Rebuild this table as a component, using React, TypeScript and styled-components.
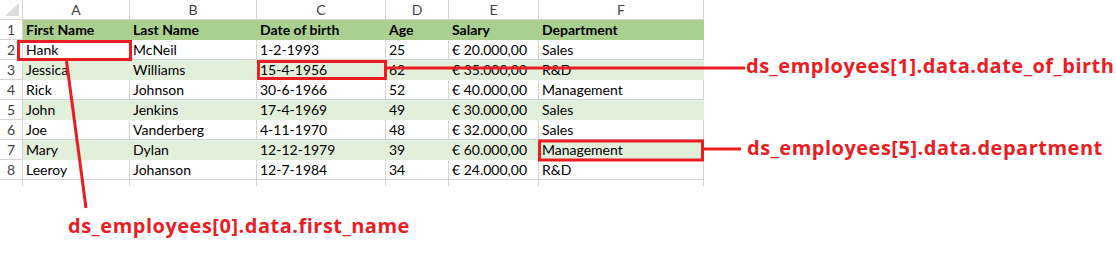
import React from "react";
import styled, { createGlobalStyle } from "styled-components";

const GlobalStyle = createGlobalStyle`
  body {
    margin: 0;
    background: #ffffff;
  }
`;

const RED = "#ec1c24";
const GRID = "#d4d4d4";

const Page = styled.div`
  position: relative;
  width: 1116px;
  height: 260px;
  overflow: hidden;
  background: #ffffff;
`;

const Sheet = styled.div`
  display: grid;
  grid-template-columns: 23px 107px 127px 129px 63px 90px 165px;
  grid-auto-rows: 20px;
  width: 704px;
  font-family: Lato, "Liberation Sans", sans-serif;
  font-size: 14px;
  color: #000000;
`;

const Corner = styled.div`
  position: relative;
  box-sizing: border-box;
  border-right: 1px solid ${GRID};
  border-bottom: 1px solid ${GRID};
  &::after {
    content: "";
    position: absolute;
    right: 3px;
    bottom: 3px;
    width: 0;
    height: 0;
    border-left: 14px solid transparent;
    border-bottom: 13px solid #dcdcdc;
  }
`;

const HeadCell = styled.div`
  box-sizing: border-box;
  border-right: 1px solid ${GRID};
  border-bottom: 1px solid ${GRID};
  display: flex;
  align-items: center;
  justify-content: center;
  font-size: 14px;
  color: #444444;
`;

const Cell = styled.div<{ $fill?: string; $bold?: boolean }>`
  box-sizing: border-box;
  padding-left: 3px;
  border-right: 1px solid ${({ $fill }) => ($fill ? "transparent" : GRID)};
  border-bottom: 1px solid ${({ $fill }) => ($fill ? "transparent" : GRID)};
  background: ${({ $fill }) => $fill ?? "transparent"};
  font-weight: ${({ $bold }) => ($bold ? 700 : 400)};
  line-height: 19px;
  white-space: nowrap;
  overflow: visible;
`;

const Stub = styled.div`
  height: 6px;
  box-sizing: border-box;
  border-right: 1px solid ${GRID};
`;

const Overlay = styled.svg`
  position: absolute;
  left: 0;
  top: 0;
  pointer-events: none;
`;

const Callout = styled.span<{ $x: number; $y: number }>`
  position: absolute;
  left: ${({ $x }) => $x}px;
  top: ${({ $y }) => $y}px;
  font-family: "Open Sans", "Liberation Sans", sans-serif;
  font-weight: 700;
  font-size: 20px;
  letter-spacing: 0.5px;
  line-height: 24px;
  color: ${RED};
  white-space: nowrap;
`;

const columns = ["A", "B", "C", "D", "E", "F"];

const header = ["First Name", "Last Name", "Date of birth", "Age", "Salary", "Department"];

const employees = [
  ["Hank", "McNeil", "1-2-1993", "25", "€ 20.000,00", "Sales"],
  ["Jessica", "Williams", "15-4-1956", "62", "€ 35.000,00", "R&D"],
  ["Rick", "Johnson", "30-6-1966", "52", "€ 40.000,00", "Management"],
  ["John", "Jenkins", "17-4-1969", "49", "€ 30.000,00", "Sales"],
  ["Joe", "Vanderberg", "4-11-1970", "48", "€ 32.000,00", "Sales"],
  ["Mary", "Dylan", "12-12-1979", "39", "€ 60.000,00", "Management"],
  ["Leeroy", "Johanson", "12-7-1984", "34", "€ 24.000,00", "R&D"],
];

const HEADER_FILL = "#a9d08e";
const BAND_FILL = "#e2efda";

export default function App() {
  return (
    <Page>
      <GlobalStyle />
      <Sheet>
        <Corner />
        {columns.map((c) => (
          <HeadCell key={c}>{c}</HeadCell>
        ))}

        <HeadCell>1</HeadCell>
        {header.map((h) => (
          <Cell key={h} $fill={HEADER_FILL} $bold>
            {h}
          </Cell>
        ))}

        {employees.map((row, i) => (
          <React.Fragment key={i}>
            <HeadCell>{i + 2}</HeadCell>
            {row.map((v, j) => (
              <Cell key={j} $fill={i % 2 === 1 ? BAND_FILL : undefined}>
                {v}
              </Cell>
            ))}
          </React.Fragment>
        ))}

        {Array.from({ length: 7 }).map((_, i) => (
          <Stub key={i} />
        ))}
      </Sheet>

      <Overlay width={1116} height={260}>
        <g fill="none" stroke={RED} strokeWidth={3}>
          <rect x={18.5} y={41.5} width={112} height={18} />
          <rect x={258.5} y={61.5} width={127} height={17} />
          <rect x={539.5} y={141} width={163} height={19} />
        </g>
        <g stroke={RED} strokeWidth={3}>
          <line x1={66.5} y1={61} x2={86} y2={208} />
          <line x1={386} y1={68} x2={745} y2={68} />
          <line x1={704} y1={149} x2={741} y2={149} />
        </g>
      </Overlay>

      <Callout $x={746} $y={54}>ds_employees[1].data.date_of_birth</Callout>
      <Callout $x={747} $y={136}>ds_employees[5].data.department</Callout>
      <Callout $x={68} $y={214}>ds_employees[0].data.first_name</Callout>
    </Page>
  );
}
